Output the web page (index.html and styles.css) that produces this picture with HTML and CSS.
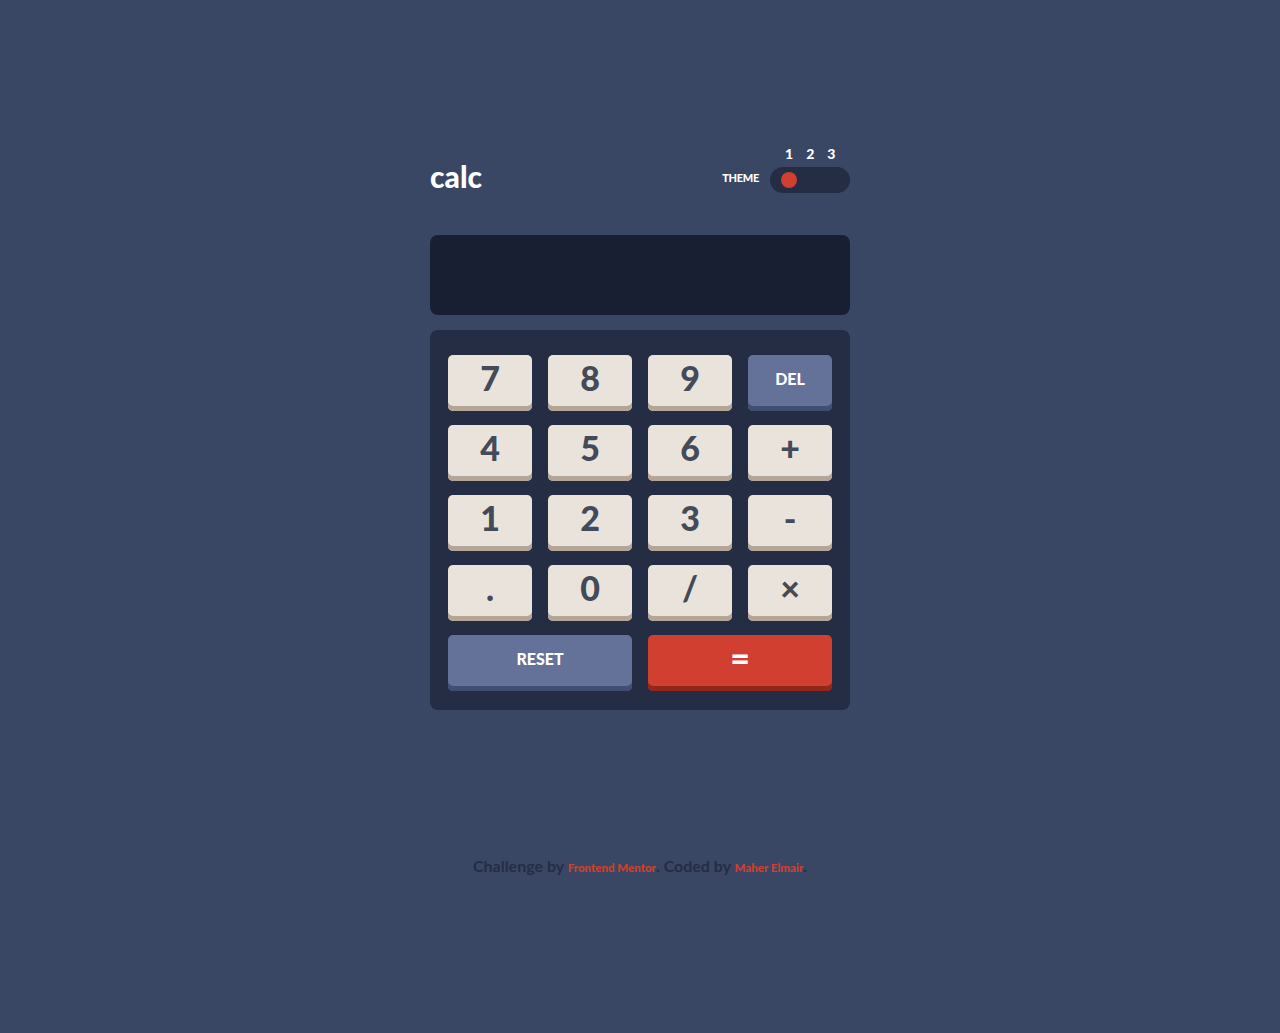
FILE: index.html
```html
<!DOCTYPE html>
<html lang="en">
<head>
<meta charset="utf-8">
<title>Calculator</title>
<link rel="stylesheet" href="styles.css">
</head>
<body>
<main class="calc">
  <header class="top">
    <h1 class="logo">calc</h1>
    <div class="theme">
      <span class="theme-label">THEME</span>
      <div class="switch">
        <div class="nums"><span>1</span><span>2</span><span>3</span></div>
        <div class="track"><span class="knob"></span></div>
      </div>
    </div>
  </header>
  <div class="screen"></div>
  <div class="pad">
    <button class="key">7</button>
    <button class="key">8</button>
    <button class="key">9</button>
    <button class="key alt small">DEL</button>
    <button class="key">4</button>
    <button class="key">5</button>
    <button class="key">6</button>
    <button class="key">+</button>
    <button class="key">1</button>
    <button class="key">2</button>
    <button class="key">3</button>
    <button class="key">-</button>
    <button class="key">.</button>
    <button class="key">0</button>
    <button class="key">/</button>
    <button class="key">×</button>
    <button class="key alt small wide">RESET</button>
    <button class="key eq wide">=</button>
  </div>
</main>
<footer class="credit">
  Challenge by <a href="#">Frontend Mentor</a>. Coded by <a href="#">Maher Elmair</a>.
</footer>
</body>
</html>
```
FILE: styles.css
```css
* { box-sizing: border-box; }
html, body { margin: 0; }
body {
  background: #3a4764;
  font-family: "Lato", "Noto Sans", sans-serif;
  min-height: 1033px;
}
.calc {
  width: 420px;
  margin: 145px auto 0;
}
.top {
  display: flex;
  justify-content: space-between;
  align-items: flex-end;
  height: 48px;
}
.logo {
  margin: 0 0 2px;
  color: #fff;
  font-size: 30px;
  font-weight: 900;
  letter-spacing: 0;
  line-height: 1;
}
.theme {
  display: flex;
  align-items: flex-end;
  gap: 11px;
}
.theme-label {
  color: #fff;
  font-size: 11px;
  font-weight: 900;
  letter-spacing: -0.3px;
  margin-bottom: 9px;
}
.switch {
  display: flex;
  flex-direction: column;
  gap: 6px;
}
.nums {
  display: flex;
  gap: 13px;
  padding-left: 15px;
  color: #fff;
  font-size: 14px;
  font-weight: 900;
  line-height: 14px;
}
.track {
  width: 80px;
  height: 26px;
  border-radius: 13px;
  background: #242d44;
  display: flex;
  align-items: center;
  padding-left: 11px;
}
.knob {
  width: 16px;
  height: 16px;
  border-radius: 50%;
  background: #d03f2f;
}
.screen {
  margin-top: 42px;
  height: 80px;
  border-radius: 8px;
  background: #181f33;
}
.pad {
  margin-top: 15px;
  background: #242d44;
  border-radius: 8px;
  padding: 25px 18px 19px;
  display: grid;
  grid-template-columns: repeat(4, 84px);
  column-gap: 16px;
  row-gap: 14px;
}
.key {
  height: 56px;
  border: 0;
  border-radius: 5px;
  background: #eae3dc;
  box-shadow: inset 0 -5px 0 #b4a597;
  color: #434a59;
  font-family: inherit;
  font-size: 34px;
  font-weight: 900;
  padding: 0 0 11px;
  line-height: 1;
}
.key.small {
  font-size: 16px;
  padding-bottom: 8px;
}
.key.alt {
  background: #647198;
  box-shadow: inset 0 -5px 0 #414e73;
  color: #fff;
}
.key.eq {
  background: #d03f2f;
  box-shadow: inset 0 -5px 0 #93261a;
  color: #fff;
}
.key.wide { grid-column: span 2; }
.credit {
  margin-top: 146px;
  text-align: center;
  color: #242d44;
  font-size: 16px;
  font-weight: 700;
}
.credit a {
  color: #d03f2f;
  font-size: 11.5px;
  font-weight: 900;
  text-decoration: none;
}
```
